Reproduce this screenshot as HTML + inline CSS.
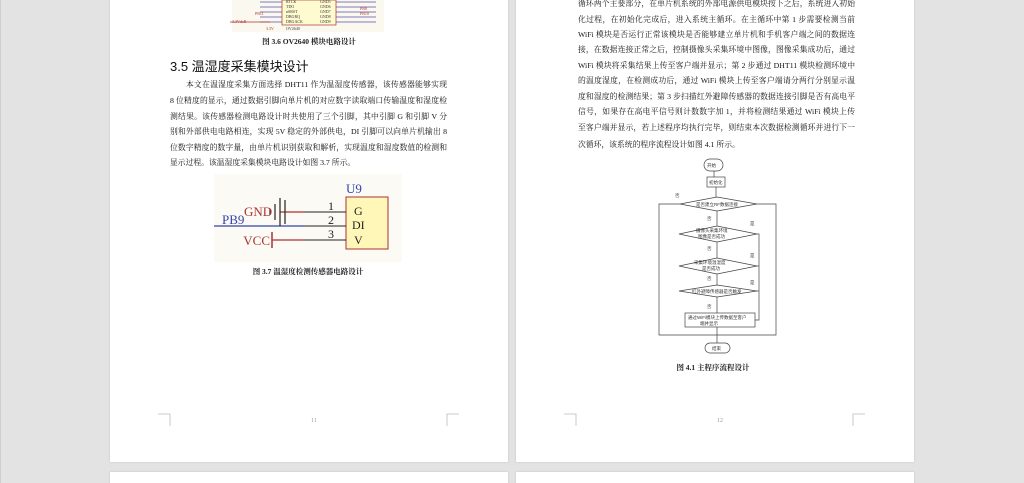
<!DOCTYPE html>
<html><head><meta charset="utf-8"><style>
html,body{margin:0;padding:0;width:1024px;height:483px;overflow:hidden;background:#e3e3e3;position:relative}
.pg{position:absolute;background:#fff;box-shadow:0 0 2px rgba(0,0,0,.15)}
.t{position:absolute;font-family:"Liberation Serif","Noto Serif CJK SC",serif;font-size:7.8px;color:#111;white-space:nowrap;overflow:hidden;line-height:15px;text-align:justify;text-align-last:justify}
.l{text-align-last:left}
.cap{position:absolute;font-family:"Liberation Serif","Noto Serif CJK SC",serif;font-size:7.5px;font-weight:bold;color:#222;white-space:nowrap;transform:translateX(-50%)}
</style></head><body>
<div style="position:absolute;left:0;top:0;width:1px;height:483px;background:#cfcfcf"></div>
<div class="pg" style="left:110px;top:-2px;width:398px;height:464px"></div>
<div class="pg" style="left:516px;top:-2px;width:398px;height:464px"></div>
<div class="pg" style="left:110px;top:472px;width:398px;height:20px"></div>
<div class="pg" style="left:516px;top:472px;width:398px;height:20px"></div>

<svg style="position:absolute;left:110px;top:0" width="398" height="60">
<rect x="122" y="0" width="152" height="32" fill="#fbf8f0"/>
<g stroke="#5555aa" stroke-width="0.8">
<line x1="150" y1="2" x2="172" y2="2"/><line x1="150" y1="7" x2="172" y2="7"/><line x1="150" y1="12" x2="172" y2="12"/><line x1="150" y1="17" x2="172" y2="17"/><line x1="150" y1="22" x2="172" y2="22"/>
<line x1="226" y1="2" x2="266" y2="2"/><line x1="226" y1="7" x2="266" y2="7"/><line x1="226" y1="12" x2="266" y2="12"/><line x1="226" y1="17" x2="266" y2="17"/><line x1="226" y1="22" x2="266" y2="22"/>
<line x1="120" y1="22" x2="160" y2="22" stroke="#a33"/>
</g>
<rect x="172" y="0" width="54" height="25" fill="#fffbd0" stroke="#a33" stroke-width="0.7"/>
<g font-family="Liberation Serif" font-size="4" fill="#333"><text x="176" y="3">RTCK</text><text x="176" y="8">TDO</text><text x="176" y="13">nSRST</text><text x="176" y="18">DBGRQ</text><text x="176" y="23">DBGACK</text>
<text x="210" y="3">GND5</text><text x="210" y="8">GND6</text><text x="210" y="13">GND7</text><text x="210" y="18">GND8</text><text x="210" y="23">GND9</text>
<text x="145" y="15" fill="#a33">PB11</text><text x="250" y="10" fill="#a33">PB8</text><text x="250" y="15" fill="#a33">PB10</text><text x="122" y="23" fill="#a33">3.3VdcB</text><text x="156" y="30" fill="#a33">3.3V</text><text x="176" y="30">OV2640</text></g>
</svg>
<div class="cap" style="left:309px;top:36px">图 3.6 OV2640 模块电路设计</div>
<div style="position:absolute;left:170px;top:56px;font-family:'Liberation Sans','Noto Sans CJK SC',sans-serif;font-size:13px;color:#111;white-space:nowrap">3.5 温湿度采集模块设计</div>

<div class="t" style="left:170px;top:77px;width:277px;text-indent:16px">本文在温湿度采集方面选择 DHT11 作为温湿度传感器，该传感器能够实现</div>
<div class="t" style="left:170px;top:93px;width:277px">8 位精度的显示，通过数据引脚向单片机的对应数字读取端口传输温度和湿度检</div>
<div class="t" style="left:170px;top:109px;width:277px">测结果。该传感器检测电路设计时共使用了三个引脚，其中引脚 G 和引脚 V 分</div>
<div class="t" style="left:170px;top:124px;width:277px">别和外部供电电路相连，实现 5V 稳定的外部供电，DI 引脚可以向单片机输出 8</div>
<div class="t" style="left:170px;top:140px;width:277px">位数字精度的数字量，由单片机识别获取和解析，实现温度和湿度数值的检测和</div>
<div class="t l" style="left:170px;top:155px;width:277px">显示过程。该温湿度采集模块电路设计如图 3.7 所示。</div>

<svg style="position:absolute;left:214px;top:174px" width="190" height="90">
<rect x="0" y="0" width="188" height="88" fill="#fcfaf4"/>
<text x="132" y="19" font-family="Liberation Serif" font-size="13" fill="#3344aa">U9</text>
<rect x="132" y="23" width="42" height="52" fill="#fff7b8" stroke="#a33" stroke-width="1"/>
<g font-family="Liberation Serif" font-size="12" fill="#222"><text x="140" y="41">G</text><text x="138" y="55">DI</text><text x="140" y="70">V</text>
<text x="114" y="36">1</text><text x="114" y="50">2</text><text x="114" y="64">3</text></g>
<g stroke="#222" stroke-width="1"><line x1="90" y1="38" x2="132" y2="38"/><line x1="90" y1="52" x2="132" y2="52"/><line x1="90" y1="66" x2="132" y2="66"/></g>
<line x1="0" y1="52" x2="90" y2="52" stroke="#3344aa" stroke-width="1.2"/>
<line x1="66" y1="38" x2="90" y2="38" stroke="#a33" stroke-width="1.2"/>
<line x1="58" y1="66" x2="90" y2="66" stroke="#a33" stroke-width="1.2"/>
<g stroke="#222" stroke-width="1.2"><line x1="66" y1="24" x2="66" y2="52"/><line x1="71" y1="26" x2="71" y2="50"/><line x1="61" y1="30" x2="61" y2="46"/><line x1="56" y1="35" x2="56" y2="41"/></g>
<line x1="58" y1="58" x2="58" y2="74" stroke="#a33" stroke-width="1.5"/>
<g font-family="Liberation Serif" font-size="13" fill="#a33"><text x="30" y="42">GND</text><text x="56" y="71" text-anchor="end">VCC</text></g>
<text x="8" y="50" font-family="Liberation Serif" font-size="13" fill="#3344aa">PB9</text>
</svg>
<div class="cap" style="left:308px;top:266px">图 3.7 温湿度检测传感器电路设计</div>

<svg style="position:absolute;left:150px;top:410px" width="320" height="20"><g stroke="#bbb" fill="none" stroke-width="0.8"><path d="M8 4H20V16"/><path d="M297 16V4H309"/></g></svg>
<div style="position:absolute;left:311px;top:418px;font-family:'Liberation Serif';font-size:6px;color:#999">11</div>
<svg style="position:absolute;left:556px;top:410px" width="320" height="20"><g stroke="#bbb" fill="none" stroke-width="0.8"><path d="M8 4H20V16"/><path d="M297 16V4H309"/></g></svg>
<div style="position:absolute;left:717px;top:418px;font-family:'Liberation Serif';font-size:6px;color:#999">12</div>

<div class="t" style="left:578px;top:-4px;width:277px">循环两个主要部分，在单片机系统的外部电源供电模块按下之后，系统进入初始</div>
<div class="t" style="left:578px;top:12px;width:277px">化过程，在初始化完成后，进入系统主循环。在主循环中第 1 步需要检测当前</div>
<div class="t" style="left:578px;top:27px;width:277px">WiFi 模块是否运行正常该模块是否能够建立单片机和手机客户端之间的数据连</div>
<div class="t" style="left:578px;top:42px;width:277px">接，在数据连接正常之后，控制摄像头采集环境中图像，图像采集成功后，通过</div>
<div class="t" style="left:578px;top:58px;width:277px">WiFi 模块将采集结果上传至客户端并显示；第 2 步通过 DHT11 模块检测环境中</div>
<div class="t" style="left:578px;top:73px;width:277px">的温度湿度，在检测成功后，通过 WiFi 模块上传至客户端请分两行分别显示温</div>
<div class="t" style="left:578px;top:89px;width:277px">度和湿度的检测结果；第 3 步扫描红外避障传感器的数据连接引脚是否有高电平</div>
<div class="t" style="left:578px;top:104px;width:277px">信号，如果存在高电平信号则计数数字加 1，并将检测结果通过 WiFi 模块上传</div>
<div class="t" style="left:578px;top:120px;width:277px">至客户端并显示，若上述程序均执行完毕，则结束本次数据检测循环并进行下一</div>
<div class="t l" style="left:578px;top:137px;width:277px">次循环，该系统的程序流程设计如图 4.1 所示。</div>

<svg style="position:absolute;left:640px;top:150px" width="160" height="210" font-family="Liberation Sans,Noto Sans CJK SC,sans-serif" font-size="4.5" fill="#333">
<g stroke="#444" stroke-width="0.7" fill="none">
<rect x="64" y="9" width="19" height="12" rx="6" fill="#fff"/>
<rect x="67" y="27" width="18" height="10" fill="#fff"/>
<path d="M40 54L77 47L117 54L77 61Z" fill="#fff"/>
<path d="M39 84L77 76L117 84L77 92Z" fill="#fff"/>
<path d="M39 116L77 108L117 116L77 124Z" fill="#fff"/>
<path d="M39 141L77 135L117 141L77 147Z" fill="#fff"/>
<rect x="45" y="163" width="70" height="14" fill="#fff"/>
<rect x="65" y="193" width="25" height="10" rx="5" fill="#fff"/>
<path d="M74 21V27M76 37V47M77 61V76M77 92V108M77 124V135M77 147V163M77 177V193"/>
<path d="M40 54H19V185H77M117 54H136V185H77"/>
<path d="M117 84H119V170H115M117 116H119M117 141H119"/>
</g>
<text x="67" y="17">开始</text><text x="69" y="34">初始化</text>
<text x="56" y="56">是否建立RF数据连接</text>
<text x="56" y="82">摄像头采集环境</text><text x="58" y="88">图像是否成功</text>
<text x="54" y="114">采集环境温湿度</text><text x="62" y="120">是否成功</text>
<text x="52" y="143">红外避障传感器是否触发</text>
<text x="48" y="169">通过WiFi模块上传数据至客户</text><text x="60" y="175">端并显示</text>
<text x="72" y="200">结束</text>
<text x="35" y="47">否</text><text x="67" y="70">否</text><text x="67" y="100">否</text><text x="67" y="130">否</text><text x="67" y="158">否</text>
<text x="110" y="75">是</text><text x="110" y="107">是</text><text x="110" y="134">是</text>
</svg>
<div class="cap" style="left:713px;top:362px">图 4.1 主程序流程设计</div>
</body></html>
